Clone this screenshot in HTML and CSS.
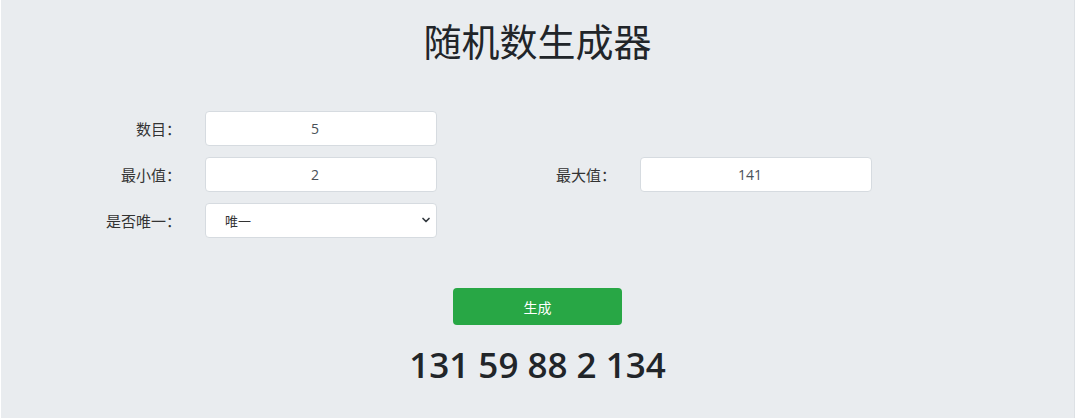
FILE: index.html
```html
<!DOCTYPE html>
<html lang="zh">
<head>
<meta charset="utf-8">
<title>随机数生成器</title>
<link rel="stylesheet" href="styles.css">
</head>
<body>
<div class="page">
  <h1 class="title">随机数生成器</h1>
  <form class="form">
    <label class="label">数目：</label>
    <input class="field" type="text" value="5">
    <span class="spacer"></span>
    <span class="spacer"></span>

    <label class="label">最小值：</label>
    <input class="field" type="text" value="2">
    <label class="label">最大值：</label>
    <input class="field" type="text" value="141">

    <label class="label">是否唯一：</label>
    <div class="select-wrap">
      <select class="select">
        <option>唯一</option>
        <option>不唯一</option>
      </select>
      <svg class="chevron" width="10" height="8" viewBox="0 0 10 8"><path d="M2 2.5 L5 5.5 L8 2.5" fill="none" stroke="#343a40" stroke-width="1.7" stroke-linecap="round" stroke-linejoin="round"/></svg>
    </div>
  </form>
  <button class="btn" type="button">生成</button>
  <div class="result">131 59 88 2 134</div>
</div>
</body>
</html>
```

FILE: styles.css
```css
html, body {
  margin: 0;
  padding: 0;
  background: #ffffff;
}
body {
  font-family: "Open Sans", "Noto Sans CJK SC", sans-serif;
  color: #212529;
}
.page {
  margin-left: 1px;
  width: 1074px;
  height: 418px;
  background: #e9ecef;
  border-right: 1px solid #dde1e5;
  box-sizing: border-box;
  display: flex;
  flex-direction: column;
  align-items: center;
}
.title {
  margin: 0;
  padding-top: 14px;
  font-family: "Noto Sans CJK SC", sans-serif;
  font-size: 38px;
  font-weight: 400;
  line-height: 52px;
  color: #212529;
  text-align: center;
}
.form {
  align-self: stretch;
  margin-top: 45px;
  display: grid;
  grid-template-columns: 180px 232px 155px 232px;
  grid-auto-rows: 35px;
  column-gap: 24px;
  row-gap: 11px;
}
.label {
  font-family: "Noto Sans CJK SC", sans-serif;
  font-size: 15px;
  color: #333;
  text-align: right;
  line-height: 35px;
}
.field, .select {
  box-sizing: border-box;
  width: 232px;
  height: 35px;
  margin: 0;
  background: #ffffff;
  border: 1px solid #d6dbe0;
  border-radius: 4px;
  font-family: "Open Sans", "Noto Sans CJK SC", sans-serif;
  font-size: 14px;
  color: #495057;
  outline: none;
}
.field {
  text-align: center;
  padding: 0 14px 0 2px;
}
.select-wrap {
  position: relative;
  width: 232px;
  height: 35px;
}
.select {
  -webkit-appearance: none;
  appearance: none;
  padding: 0 30px 0 19px;
  font-family: "Noto Sans CJK SC", sans-serif;
  font-size: 13px;
  color: #333;
}
.chevron {
  position: absolute;
  right: 6px;
  top: 13px;
  pointer-events: none;
}
.btn {
  margin-top: 50px;
  width: 169px;
  height: 37px;
  background: #28a745;
  border: none;
  border-radius: 4px;
  color: #ffffff;
  font-family: "Noto Sans CJK SC", sans-serif;
  font-size: 14px;
  padding: 0;
}
.result {
  margin-top: 17px;
  font-family: "Open Sans", sans-serif;
  font-size: 35px;
  font-weight: 600;
  line-height: 46px;
  color: #212529;
}
```
